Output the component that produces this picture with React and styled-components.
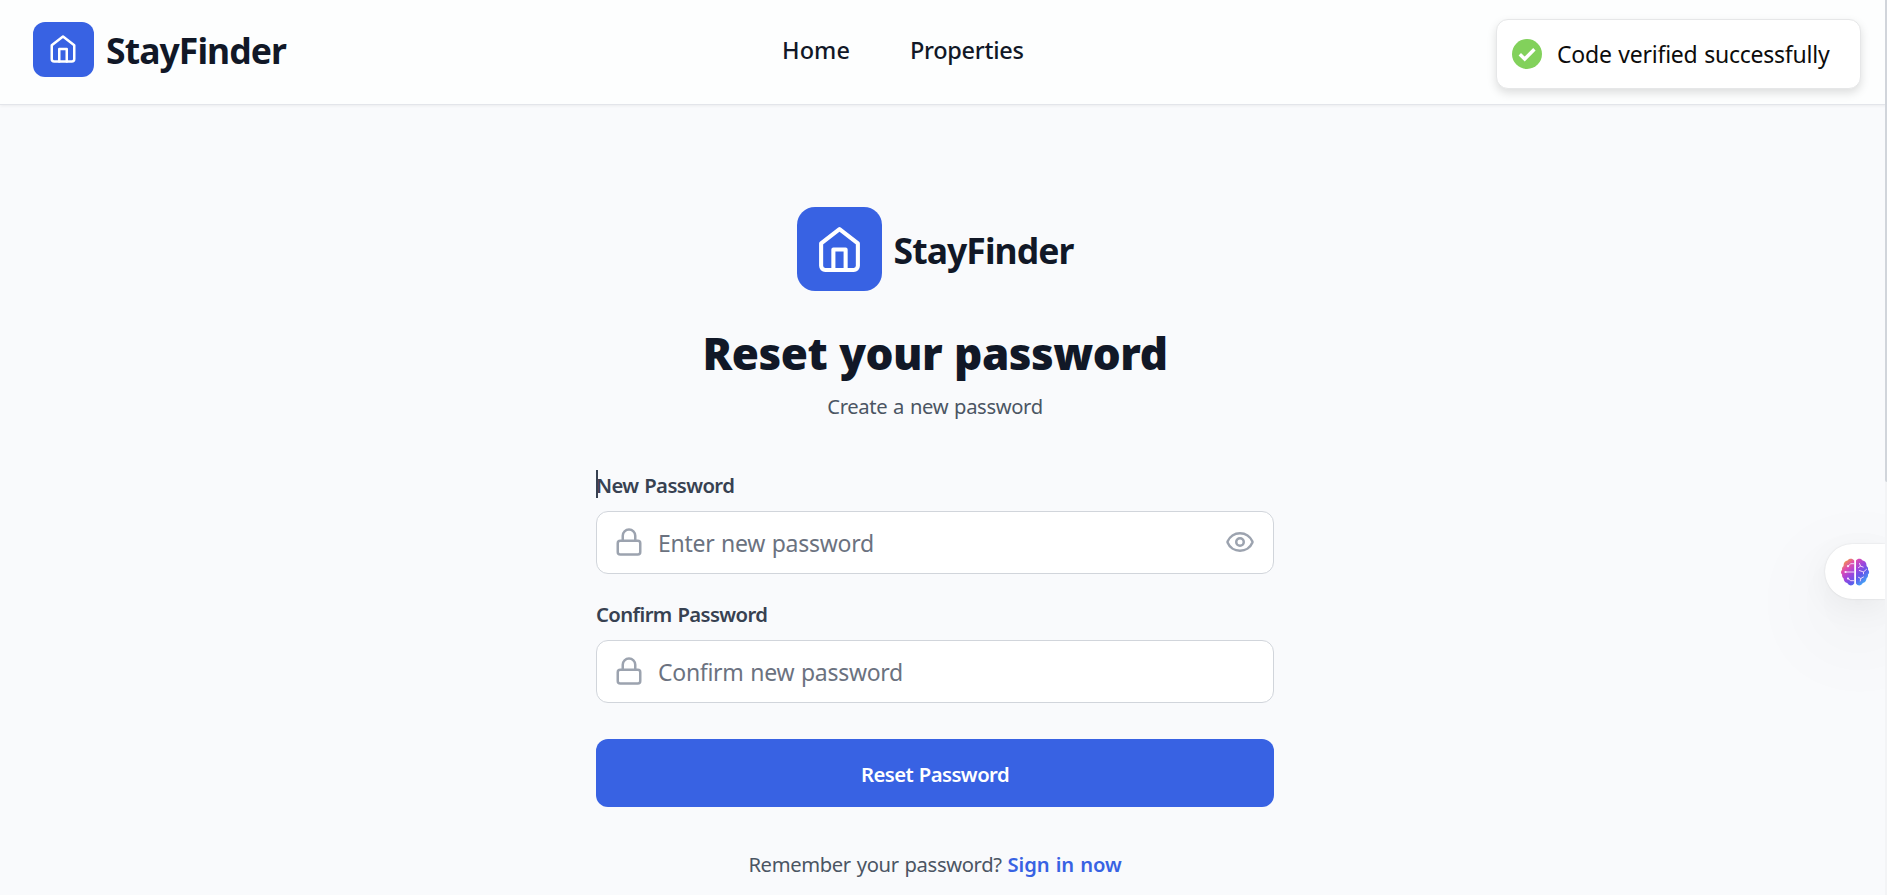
import React from 'react';
import styled, { createGlobalStyle } from 'styled-components';

const GlobalStyle = createGlobalStyle`
  * { box-sizing: border-box; }
  body {
    margin: 0;
    background: #f9fafc;
    font-family: "Noto Sans", "Open Sans", sans-serif;
    overflow: hidden;
  }
`;

const Page = styled.div`
  position: relative;
  height: 895px;
  padding-right: 17px;
  overflow: hidden;
`;

const Header = styled.header`
  display: flex;
  align-items: center;
  height: 105px;
  margin-right: -17px;
  padding: 0 33px 6px;
  background: #fdfefe;
  border-bottom: 1px solid #e3e5ea;
  box-shadow: 0 1px 3px rgba(0, 0, 0, 0.06);
`;

const Brand = styled.div`
  display: flex;
  align-items: center;
  gap: 12px;
`;

const LogoTile = styled.span`
  display: flex;
  align-items: center;
  justify-content: center;
  width: ${({ $large }) => ($large ? '85px' : '61px')};
  height: ${({ $large }) => ($large ? '84px' : '55px')};
  padding-right: ${({ $large }) => ($large ? '0' : '1px')};
  border-radius: ${({ $large }) => ($large ? '18px' : '12px')};
  background: #3862e3;
  color: #fff;
  svg { display: block; }
`;

const BrandName = styled.span`
  padding-top: 2px;
  font-size: 35.5px;
  font-weight: 700;
  line-height: 54px;
  letter-spacing: -0.92px;
  color: #111827;
`;

const Nav = styled.nav`
  display: flex;
  gap: 60px;
  margin-left: 496px;
  padding-top: 2px;
`;

const NavLink = styled.a`
  font-size: 23.5px;
  font-weight: 500;
  line-height: 36px;
  letter-spacing: ${({ $tight }) => ($tight ? '-0.3px' : '0.1px')};
  color: #111827;
`;

const Main = styled.main`
  display: flex;
  flex-direction: column;
  align-items: center;
  padding-top: 102px;
`;

const Title = styled.h1`
  margin: 35px 0 11px;
  font-size: 44px;
  font-weight: 900;
  line-height: 54px;
  letter-spacing: -0.5px;
  word-spacing: 1px;
  color: #111827;
`;

const Subtitle = styled.p`
  margin: 0;
  font-size: 20.2px;
  line-height: 30px;
  letter-spacing: -0.36px;
  word-spacing: 1px;
  color: #4b5563;
`;

const Form = styled.form`
  display: flex;
  flex-direction: column;
  width: 678px;
  margin-top: 49px;
`;

const Field = styled.div`
  display: flex;
  flex-direction: column;
  gap: 11px;
  margin-bottom: ${({ $last }) => ($last ? '36px' : '25px')};
`;

const Label = styled.label`
  position: relative;
  font-size: 20.3px;
  font-weight: 600;
  line-height: 30px;
  letter-spacing: -0.6px;
  word-spacing: 1px;
  color: #374151;
`;

const Caret = styled.span`
  position: absolute;
  left: 0;
  top: 0;
  width: 2px;
  height: 28px;
  background: #374151;
`;

const InputBox = styled.div`
  display: flex;
  align-items: center;
  height: 63px;
  padding: 0 18px 0 17px;
  border: 1px solid #d1d5db;
  border-radius: 12px;
  background: #fff;
  color: #9ca3af;
  svg { flex: none; display: block; margin-bottom: 2px; }
`;

const Input = styled.input`
  flex: 1;
  min-width: 0;
  margin: 0 0 0 14px;
  padding: 0;
  border: 0;
  outline: 0;
  background: transparent;
  font: 400 23px/36px "Noto Sans", "Open Sans", sans-serif;
  letter-spacing: -0.28px;
  word-spacing: 1px;
  &::placeholder { color: #6b7280; opacity: 1; }
`;

const SubmitButton = styled.button`
  height: 68px;
  padding: 2px 0 0;
  border: 0;
  border-radius: 12px;
  background: #3862e3;
  color: #fff;
  font: 600 20.3px/30px "Noto Sans", "Open Sans", sans-serif;
  letter-spacing: -0.57px;
  word-spacing: 1px;
`;

const Footnote = styled.p`
  margin: 42px 0 0;
  font-size: 20.2px;
  line-height: 30px;
  letter-spacing: -0.35px;
  word-spacing: 1px;
  color: #4b5563;
`;

const SignInLink = styled.a`
  font-weight: 600;
  letter-spacing: -0.1px;
  color: #3862e3;
`;

const Toast = styled.div`
  position: absolute;
  top: 19px;
  left: 1496px;
  display: flex;
  align-items: center;
  gap: 15px;
  width: 365px;
  height: 70px;
  padding-left: 15px;
  border: 1px solid #e6e7e8;
  border-radius: 12px;
  background: #fff;
  box-shadow: 0 4px 10px rgba(0, 0, 0, 0.13);
  font-size: 23px;
  line-height: 36px;
  letter-spacing: -0.24px;
  word-spacing: 1px;
  color: #0c0c0c;
  white-space: nowrap;
`;

const AssistantTab = styled.div`
  position: absolute;
  top: 544px;
  right: 2px;
  display: flex;
  align-items: center;
  width: 60px;
  height: 55px;
  padding-left: 15px;
  border-radius: 28px 0 0 28px;
  background: #fff;
  box-shadow: 0 0 2px rgba(0, 0, 0, 0.12), 0 9px 30px rgba(0, 0, 0, 0.05), 0 30px 90px 12px rgba(0, 0, 0, 0.05);
`;

const ScrollTrack = styled.div`
  position: absolute;
  top: 0;
  right: 0;
  width: 2px;
  height: 895px;
  background: #f3f4f6;
`;

const ScrollThumb = styled.div`
  height: 482px;
  border-bottom-left-radius: 2px;
  background: #d1d5db;
`;

function HouseIcon({ size }) {
  return (
    <svg width={size} height={size} viewBox="0 0 24 24" fill="none" stroke="currentColor" strokeWidth="2" strokeLinecap="round" strokeLinejoin="round">
      <path d="m3 9 9-7 9 7v11a2 2 0 0 1-2 2H5a2 2 0 0 1-2-2z" />
      <path d="M9 22V12h6v10" />
    </svg>
  );
}

function LockIcon() {
  return (
    <svg width="30" height="30" viewBox="0 0 24 24" fill="none" stroke="currentColor" strokeWidth="2" strokeLinecap="round" strokeLinejoin="round">
      <rect x="3" y="11" width="18" height="11" rx="2" />
      <path d="M7 11V7a5 5 0 0 1 10 0v4" />
    </svg>
  );
}

function EyeIcon() {
  return (
    <svg width="30" height="30" viewBox="0 0 24 24" fill="none" stroke="currentColor" strokeWidth="2" strokeLinecap="round" strokeLinejoin="round">
      <path d="M2.062 12.348a1 1 0 0 1 0-.696 10.75 10.75 0 0 1 19.876 0 1 1 0 0 1 0 .696 10.75 10.75 0 0 1-19.876 0" />
      <circle cx="12" cy="12" r="3" />
    </svg>
  );
}

function CheckIcon() {
  return (
    <svg width="30" height="30" viewBox="0 0 30 30" fill="none">
      <circle cx="15" cy="15" r="15" fill="#82d15b" />
      <path d="m7.8 15.300 4.900 4.700 9.700-9.800" stroke="#fff" strokeWidth="3.400" />
    </svg>
  );
}

function BrainIcon() {
  return (
    <svg width="30" height="28" viewBox="0 0 30 28" fill="none">
      <defs>
        <linearGradient id="brain" x1="5" y1="1" x2="26" y2="25" gradientUnits="userSpaceOnUse">
          <stop offset="0" stopColor="#f2a23c" />
          <stop offset="0.25" stopColor="#e04bb0" />
          <stop offset="0.48" stopColor="#a044dc" />
          <stop offset="0.7" stopColor="#6258ea" />
          <stop offset="1" stopColor="#3fb0f8" />
        </linearGradient>
      </defs>
      <path fill="url(#brain)" d="M14.2 2.500C12.500 0 8.800.2 7.500 2.600 5 3 3.300 5.300 3.600 8c-1.300 1-1.800 2.300-1.500 3.700C.6 13 .6 15.300 2.100 16.500c-.2 1.700.3 3 1.500 4 .1 2.300 1.500 4 3.700 4.600 1.400 2.800 5.300 3.200 6.900.4zM16 2.500c1.600-2.500 5.300-2.300 6.600.1 2.500.4 4.200 2.700 3.900 5.400 1.300 1 1.800 2.300 1.500 3.700 1.500 1.300 1.500 3.600 0 4.800.2 1.700-.3 3-1.500 4-.1 2.300-1.500 4-3.700 4.600-1.400 2.800-5.200 3.200-6.800.4z" />
      <g stroke="#f0d4fa" strokeWidth="1" strokeLinecap="round">
        <path d="M14.200 5.700h-3.400L8 8.200M14.200 14H5.500M14.200 22.700h-3.500L8 20.500" />
        <path d="M19.500 5.500l1 2.600-2 1.500m2-1.500 2.700 1M19.300 12.500l4.200 1.500 3-2.700m-3 2.700v1.800M18.500 19.300l2.300 1.200 2.700-1.500m-2.700 1.500-.5 2.500" />
      </g>
      <g fill="#f8e6fc">
        <circle cx="8" cy="8.200" r="1.100" />
        <circle cx="5.500" cy="14" r="1.100" />
        <circle cx="8" cy="20.500" r="1.100" />
      </g>
    </svg>
  );
}

export default function App() {
  return (
    <Page>
      <GlobalStyle />
      <Header>
        <Brand>
          <LogoTile><HouseIcon size={30} /></LogoTile>
          <BrandName>StayFinder</BrandName>
        </Brand>
        <Nav>
          <NavLink>Home</NavLink>
          <NavLink $tight>Properties</NavLink>
        </Nav>
      </Header>
      <Main>
        <Brand>
          <LogoTile $large><HouseIcon size={49} /></LogoTile>
          <BrandName>StayFinder</BrandName>
        </Brand>
        <Title>Reset your password</Title>
        <Subtitle>Create a new password</Subtitle>
        <Form>
          <Field>
            <Label><Caret />New Password</Label>
            <InputBox>
              <LockIcon />
              <Input type="password" placeholder="Enter new password" />
              <EyeIcon />
            </InputBox>
          </Field>
          <Field $last>
            <Label>Confirm Password</Label>
            <InputBox>
              <LockIcon />
              <Input type="password" placeholder="Confirm new password" />
            </InputBox>
          </Field>
          <SubmitButton type="button">Reset Password</SubmitButton>
        </Form>
        <Footnote>
          Remember your password? <SignInLink>Sign in now</SignInLink>
        </Footnote>
      </Main>
      <Toast><CheckIcon />Code verified successfully</Toast>
      <AssistantTab><BrainIcon /></AssistantTab>
      <ScrollTrack><ScrollThumb /></ScrollTrack>
    </Page>
  );
}
